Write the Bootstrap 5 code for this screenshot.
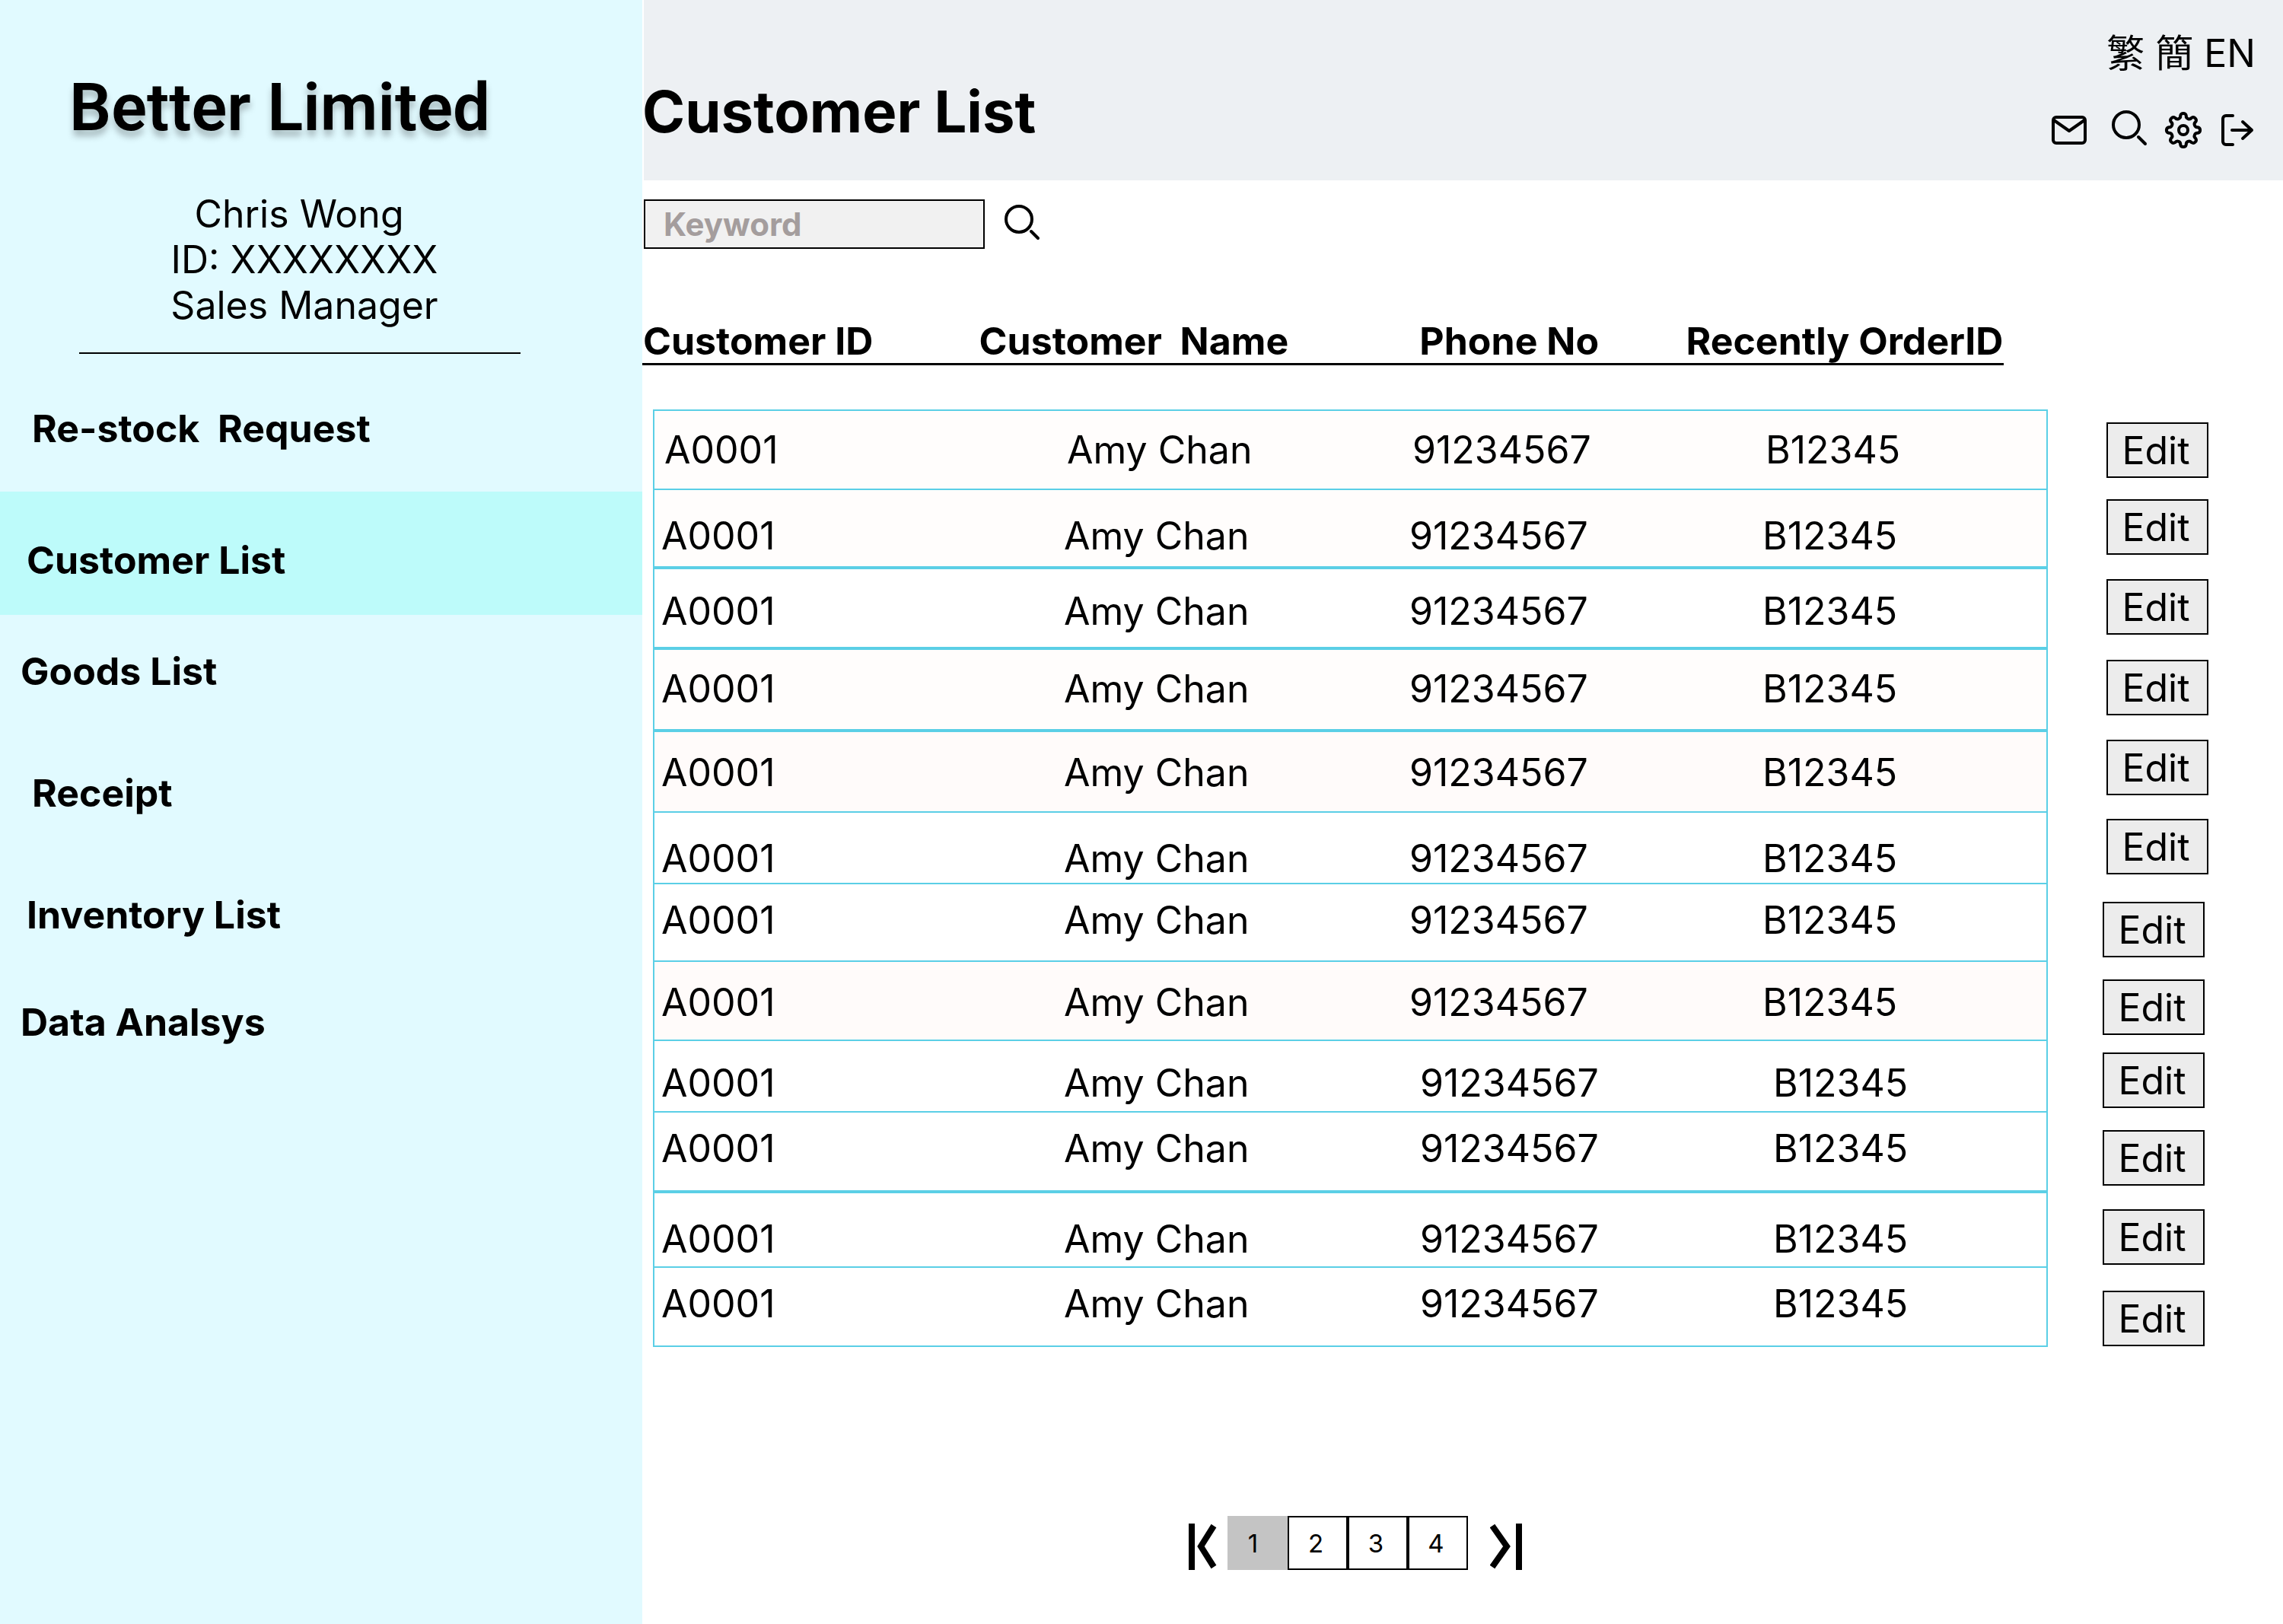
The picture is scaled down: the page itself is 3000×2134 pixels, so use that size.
<!DOCTYPE html>
<html lang="en">
<head>
<meta charset="utf-8">
<meta name="viewport" content="width=device-width, initial-scale=1">
<title>Customer List - Better Limited</title>
<link rel="stylesheet" href="https://cdn.jsdelivr.net/npm/bootstrap@5.3.0/dist/css/bootstrap.min.css">
<style>
  body { font-family: Inter, "Noto Sans CJK TC", sans-serif; font-size: 50px; line-height: 60px; color: #000; background: #fff; }
  a { color: #000; text-decoration: none; }
  svg { display: block; fill: none; stroke: #000; stroke-width: 4; stroke-linecap: round; stroke-linejoin: round; }

  .sidebar { flex: 0 0 844px; background: #e1faff; }
  .brand { font-family: Roboto, sans-serif; font-weight: 600; font-size: 87px; line-height: 104px; padding: 89px 0 0 91px; text-shadow: 0 8px 8px rgba(0,0,0,.25); }
  .profile { width: 800px; padding-top: 58px; }
  .side-rule { height: 2px; margin: 32px 160px 0 104px; background: #000; opacity: 1; border: 0; }
  .side-nav { padding-top: 68px; font-weight: 700; }
  .side-nav a { display: block; padding: 0 42px; margin-bottom: 100px; white-space: pre; }
  .side-nav li:nth-child(3n+2) a { padding-left: 35px; }
  .side-nav li:nth-child(3n) a { padding-left: 27px; }
  .side-nav li:first-child a { margin-bottom: 53px; }
  .side-nav a.active { padding-top: 60px; padding-bottom: 42px; margin-bottom: 44px; background: #bdfbfa; }
  .side-nav li:nth-child(5) a { margin-bottom: 81px; }

  .topbar { height: 237px; padding: 40px 36px 0 0; background: #edf0f3; box-shadow: inset 2px 0 #fff; }
  .topbar h1 { font-size: 76px; line-height: 92px; font-weight: 700; margin: 60px 0 0; }
  .tools { padding-top: 45px; gap: 18px; }

  .search { padding: 25px 0 0 2px; gap: 24px; }
  .search input { width: 448px; height: 65px; padding: 0 24px; border: 2px solid #000; border-radius: 0; background: #f1f1f1; font-size: 42px; font-weight: 700; }
  .search input::placeholder { color: #a49d9d; opacity: 1; }

  .customers { display: block; margin: 92px 0 0; }
  .customers thead, .customers tbody { display: block; }
  .customers thead tr { display: grid; grid-template-columns: 444fr 582fr 352fr 413fr; width: 83%; border-bottom: 3px solid #000; margin-bottom: 58px; }
  .customers th { font-weight: 700; line-height: 56px; white-space: pre; }
  .customers tbody { margin-left: 14px; }
  .customers tbody tr { display: grid; grid-template-columns: 531fr 454fr 464fr 384fr 309fr; }
  .customers td { border-top: 2px solid #5bcfe6; padding: 21px 0 0 9px; }
  .customers td:first-child { border-left: 2px solid #5bcfe6; }
  .customers td:nth-child(4) { border-right: 2px solid #5bcfe6; }
  .customers td:last-child { border-top: 0; padding: 17px 0 0 77px; }
  .customers tbody:last-child tr:last-child td:not(:last-child) { border-bottom: 2px solid #5bcfe6; }
  .customers .double td:not(:last-child) { border-top-width: 4px; }
  .customers .text-high td { padding-top: 17px; }
  .customers .text-mid td { padding-top: 23px; }
  .customers .text-low td { padding-top: 25px; }
  .customers .text-lowest td { padding-top: 30px; }
  .customers .btn-mid td:last-child { padding-top: 17px; }
  .customers .btn-high td:last-child { padding-top: 14px; }
  .customers .btn-highest td:last-child { padding-top: 10px; }
  .customers .btn-drop td:last-child { padding-top: 25px; }
  .customers .btn-end td:last-child { padding-top: 32px; }
  .customers .lead-rows td:nth-child(-n+4) { padding-left: 13px; }
  .customers .lower-rows td:last-child { padding-left: 72px; }
  .customers .late-rows td:nth-child(3), .customers .late-rows td:nth-child(4) { padding-left: 23px; }
  .r94 { height: 94px; } .r100 { height: 100px; } .r102 { height: 102px; } .r104 { height: 104px; } .r106 { height: 106px; } .r108 { height: 108px; }
  .cream td:not(:last-child) { background: #fffdfc; }
  .rose td:not(:last-child) { background: #fffbfa; }
  .edit-btn { display: block; width: 134px; height: 73px; padding: 0 4px 0 0; border: 2px solid #000; background: #ececec; color: #000; font-size: 50px; line-height: 60px; }

  .pager { margin: 222px 0 71px 717px; }
  .pager button { padding: 0; border: 0; background: none; }
  .pager .pages { margin: 0 29px 0 14px; }
  .pager .pages button { width: 79px; height: 71px; border: 2px solid #000; padding-right: 5px; font-size: 33px; line-height: 40px; }
  .pager .pages button.current { background: #c4c4c4; border-color: #c4c4c4; padding-right: 12px; }
  .pager svg { stroke-linecap: butt; stroke-linejoin: miter; stroke-width: 8; }
</style>
</head>
<body>
<div class="d-flex min-vh-100">
  <aside class="sidebar">
    <div class="brand">Better Limited</div>
    <div class="profile text-center">
      <div>Chris Wong&nbsp;</div>
      <div>ID: XXXXXXXX</div>
      <div>Sales Manager</div>
    </div>
    <hr class="side-rule">
    <nav class="side-nav" aria-label="Main">
      <ul class="list-unstyled mb-0">
        <li><a href="#">Re-stock  Request</a></li>
        <li><a href="#" class="active" aria-current="page">Customer List</a></li>
        <li><a href="#">Goods List</a></li>
        <li><a href="#">Receipt</a></li>
        <li><a href="#">Inventory List</a></li>
        <li><a href="#">Data Analsys</a></li>
      </ul>
    </nav>
  </aside>

  <main class="flex-grow-1">
    <header class="topbar d-flex justify-content-between align-items-start">
      <h1>Customer List</h1>
      <div class="d-flex flex-column align-items-end">
        <div class="langs"><a href="#">繁</a> <a href="#">簡</a> <a href="#">EN</a></div>
        <div class="tools d-flex align-items-center">
          <a href="#" aria-label="Mail"><svg width="58" height="52" viewBox="0 0 58 52"><rect x="2" y="9" width="42" height="34" rx="4"/><path d="M3 13L23 27 43 13"/></svg></a>
          <a href="#" aria-label="Search"><svg width="52" height="52" viewBox="0 0 52 52"><circle cx="22" cy="19" r="17"/><path d="M38 35L47 44"/></svg></a>
          <a href="#" aria-label="Settings"><svg width="52" height="52" viewBox="0 0 52 52"><circle cx="27" cy="26" r="6"/><path d="M23.2 6.9A3.9 3.9 0 0 1 30.8 6.9A3.9 3.9 0 0 0 37.8 9.8A3.9 3.9 0 0 1 43.2 15.2A3.9 3.9 0 0 0 46.1 22.2A3.9 3.9 0 0 1 46.1 29.8A3.9 3.9 0 0 0 43.2 36.8A3.9 3.9 0 0 1 37.8 42.2A3.9 3.9 0 0 0 30.8 45.1A3.9 3.9 0 0 1 23.2 45.1A3.9 3.9 0 0 0 16.2 42.2A3.9 3.9 0 0 1 10.8 36.8A3.9 3.9 0 0 0 7.9 29.8A3.9 3.9 0 0 1 7.9 22.2A3.9 3.9 0 0 0 10.8 15.2A3.9 3.9 0 0 1 16.2 9.8A3.9 3.9 0 0 0 23.2 6.9Z"/></svg></a>
          <a href="#" aria-label="Log out"><svg width="52" height="52" viewBox="0 0 52 52"><path d="M22 7H13a4 4 0 0 0-4 4V41a4 4 0 0 0 4 4H22M21 26H47M35 15L47 26 35 37"/></svg></a>
        </div>
      </div>
    </header>

    <form class="search d-flex">
      <input type="text" placeholder="Keyword" aria-label="Keyword">
      <button type="button" class="btn p-0 border-0" aria-label="Search"><svg width="50" height="56" viewBox="0 0 50 56"><circle cx="21" cy="21" r="17"/><path d="M37 37L46 46"/></svg></button>
    </form>

    <table class="customers">
      <thead>
        <tr><th>Customer ID</th><th>Customer  Name</th><th>Phone No</th><th>Recently OrderID</th></tr>
      </thead>
      <tbody class="lead-rows">
        <tr class="r104 cream btn-mid"><td>A0001</td><td>Amy Chan</td><td>91234567</td><td>B12345</td><td><button class="edit-btn">Edit</button></td></tr>
      </tbody>
      <tbody>
        <tr class="r102 cream text-lowest btn-high"><td>A0001</td><td>Amy Chan</td><td>91234567</td><td>B12345</td><td><button class="edit-btn">Edit</button></td></tr>
        <tr class="r106 double text-low btn-mid"><td>A0001</td><td>Amy Chan</td><td>91234567</td><td>B12345</td><td><button class="edit-btn">Edit</button></td></tr>
        <tr class="r108 cream double btn-mid"><td>A0001</td><td>Amy Chan</td><td>91234567</td><td>B12345</td><td><button class="edit-btn">Edit</button></td></tr>
        <tr class="r108 rose double text-mid btn-high"><td>A0001</td><td>Amy Chan</td><td>91234567</td><td>B12345</td><td><button class="edit-btn">Edit</button></td></tr>
        <tr class="r94 text-lowest btn-highest"><td>A0001</td><td>Amy Chan</td><td>91234567</td><td>B12345</td><td><button class="edit-btn">Edit</button></td></tr>
      </tbody>
      <tbody class="lower-rows">
        <tr class="r102 text-high btn-drop"><td>A0001</td><td>Amy Chan</td><td>91234567</td><td>B12345</td><td><button class="edit-btn">Edit</button></td></tr>
        <tr class="r104 rose text-mid btn-drop"><td>A0001</td><td>Amy Chan</td><td>91234567</td><td>B12345</td><td><button class="edit-btn">Edit</button></td></tr>
      </tbody>
      <tbody class="lower-rows late-rows">
        <tr class="r94 text-low btn-mid"><td>A0001</td><td>Amy Chan</td><td>91234567</td><td>B12345</td><td><button class="edit-btn">Edit</button></td></tr>
        <tr class="r104 text-high btn-drop"><td>A0001</td><td>Amy Chan</td><td>91234567</td><td>B12345</td><td><button class="edit-btn">Edit</button></td></tr>
        <tr class="r100 double text-lowest btn-drop"><td>A0001</td><td>Amy Chan</td><td>91234567</td><td>B12345</td><td><button class="edit-btn">Edit</button></td></tr>
        <tr class="r106 text-high btn-end"><td>A0001</td><td>Amy Chan</td><td>91234567</td><td>B12345</td><td><button class="edit-btn">Edit</button></td></tr>
      </tbody>
    </table>

    <nav class="pager d-flex align-items-end" aria-label="Pages">
      <button aria-label="First page"><svg width="38" height="62" viewBox="0 0 38 62"><path d="M5 1V62M34 4L17 31 34 58"/></svg></button>
      <div class="pages d-flex">
        <button class="current" aria-current="page">1</button><button>2</button><button>3</button><button>4</button>
      </div>
      <button aria-label="Last page"><svg width="44" height="62" viewBox="0 0 44 62"><path d="M3 4L22 31 3 58M38 1V62"/></svg></button>
    </nav>
  </main>
</div>
<script src="https://cdn.jsdelivr.net/npm/bootstrap@5.3.0/dist/js/bootstrap.bundle.min.js"></script>
</body>
</html>
